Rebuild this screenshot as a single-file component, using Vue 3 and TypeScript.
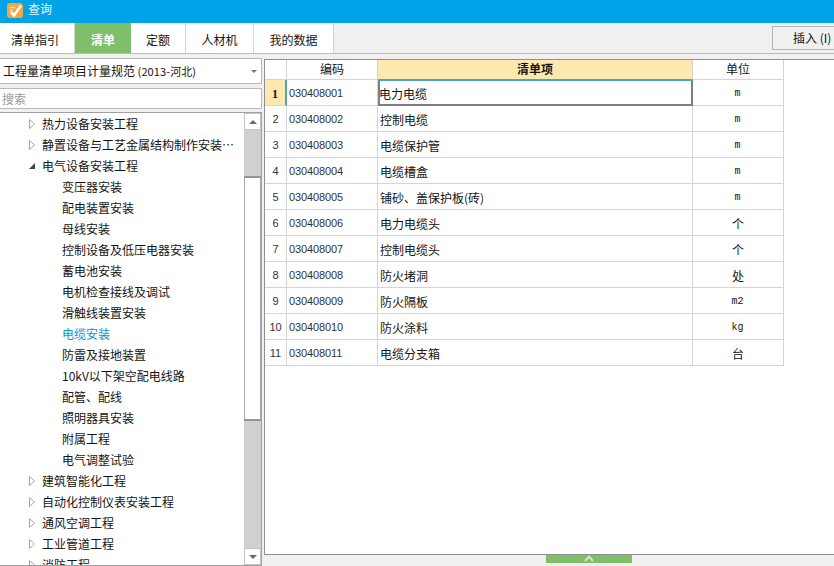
<script setup lang="ts">
const tabs = [
  { label: '清单指引', width: 75, first: true },
  { label: '清单', width: 56, active: true },
  { label: '定额', width: 55 },
  { label: '人材机', width: 68 },
  { label: '我的数据', width: 80 },
]
interface TreeItem { label: string; level: 0 | 1; state?: 'closed' | 'open'; current?: boolean }
const tree: TreeItem[] = [
  { label: '热力设备安装工程', level: 0, state: 'closed' },
  { label: '静置设备与工艺金属结构制作安装…', level: 0, state: 'closed' },
  { label: '电气设备安装工程', level: 0, state: 'open' },
  { label: '变压器安装', level: 1 },
  { label: '配电装置安装', level: 1 },
  { label: '母线安装', level: 1 },
  { label: '控制设备及低压电器安装', level: 1 },
  { label: '蓄电池安装', level: 1 },
  { label: '电机检查接线及调试', level: 1 },
  { label: '滑触线装置安装', level: 1 },
  { label: '电缆安装', level: 1, current: true },
  { label: '防雷及接地装置', level: 1 },
  { label: '10kV以下架空配电线路', level: 1 },
  { label: '配管、配线', level: 1 },
  { label: '照明器具安装', level: 1 },
  { label: '附属工程', level: 1 },
  { label: '电气调整试验', level: 1 },
  { label: '建筑智能化工程', level: 0, state: 'closed' },
  { label: '自动化控制仪表安装工程', level: 0, state: 'closed' },
  { label: '通风空调工程', level: 0, state: 'closed' },
  { label: '工业管道工程', level: 0, state: 'closed' },
  { label: '消防工程', level: 0, state: 'closed' },
]
const rows = [
  ['030408001', '电力电缆', 'm'],
  ['030408002', '控制电缆', 'm'],
  ['030408003', '电缆保护管', 'm'],
  ['030408004', '电缆槽盒', 'm'],
  ['030408005', '铺砂、盖保护板(砖)', 'm'],
  ['030408006', '电力电缆头', '个'],
  ['030408007', '控制电缆头', '个'],
  ['030408008', '防火堵洞', '处'],
  ['030408009', '防火隔板', 'm2'],
  ['030408010', '防火涂料', 'kg'],
  ['030408011', '电缆分支箱', '台'],
]
</script>

<template>
  <div class="app">
    <header class="titlebar">
      <svg class="logo" width="16" height="16" viewBox="0 0 16 16">
        <rect x="0" y="0" width="16" height="15" rx="3" fill="#f3a63c" />
        <path d="M2.5 4.5 H8.5 M2.5 7.5 H6" fill="none" stroke="#fbdca6" stroke-width="1.6" />
        <path d="M4 9 L7 12.5 L14 2.5" fill="none" stroke="#fff" stroke-width="2.6" />
      </svg>
      <span>查询</span>
    </header>
    <nav class="tabbar">
      <div
        v-for="tab in tabs"
        :key="tab.label"
        class="tab"
        :class="{ active: tab.active, first: tab.first }"
        :style="{ width: tab.width + 'px' }"
      >{{ tab.label }}</div>
      <button class="insert">插入 (I)</button>
    </nav>
    <main class="body">
      <aside class="left">
        <div class="select">
          <span>工程量清单项目计量规范<small> (2013-河北)</small></span>
          <i class="caret"></i>
        </div>
        <div class="search">搜索</div>
        <div class="treebox">
          <ul class="tree">
            <li
              v-for="item in tree"
              :key="item.label"
              class="node"
              :class="['lv' + item.level, { current: item.current }]"
            >
              <svg v-if="item.state === 'closed'" class="arrow" width="6" height="10" viewBox="0 0 6 10">
                <path d="M.5 .5 L5.5 5 L.5 9.5 Z" fill="#fff" stroke="#a6a6a6" />
              </svg>
              <svg v-else-if="item.state === 'open'" class="arrow" width="6" height="10" viewBox="0 0 6 10">
                <path d="M6 2 V8 H0 Z" fill="#444" />
              </svg>
              <span>{{ item.label }}</span>
            </li>
          </ul>
          <div class="scroll">
            <div class="sbtn"><i class="up"></i></div>
            <div class="track-top"></div>
            <div class="thumb"></div>
            <div class="track-bottom"></div>
            <div class="sbtn"><i class="down"></i></div>
          </div>
        </div>
      </aside>
      <section class="right">
        <div class="gridbox">
          <div class="grid">
            <div class="cell head idx"></div>
            <div class="cell head">编码</div>
            <div class="cell head hl">清单项</div>
            <div class="cell head">单位</div>
            <template v-for="(row, i) in rows" :key="row[0]">
              <div class="cell idx" :class="{ selidx: i === 0 }">{{ i + 1 }}</div>
              <div class="cell code">{{ row[0] }}</div>
              <div class="cell name" :class="{ selname: i === 0 }">{{ row[1] }}</div>
              <div class="cell unit" :class="{ latin: /^[a-z]/.test(row[2]) }">{{ row[2] }}</div>
            </template>
          </div>
        </div>
        <div class="footer">
          <div class="handle">
            <svg width="12" height="8" viewBox="0 0 12 8"><path d="M2 6 L6 1.5 L10 6" fill="none" stroke="#cfe8c8" stroke-width="2" /></svg>
          </div>
        </div>
      </section>
    </main>
  </div>
</template>

<style>
html, body { margin: 0; height: 100%; overflow: hidden; background: #f0f0f0; }
</style>

<style scoped>
.app {
  width: 834px;
  height: 566px;
  display: flex;
  flex-direction: column;
  overflow: hidden;
  font: 12px/1 "Noto Sans CJK SC", "Liberation Sans", sans-serif;
  color: #141414;
}
.titlebar {
  height: 23px;
  flex: none;
  background: #00a2e8;
  color: #e6f6fd;
  display: flex;
  align-items: center;
  gap: 5px;
  padding: 0 0 6px 7px;
  box-sizing: border-box;
  font-size: 12px;
}
.logo { flex: none; margin-top: 5px; }
.tabbar {
  height: 31px;
  flex: none;
  box-sizing: border-box;
  background: #f0f0f0;
  border-bottom: 1px solid #a5cf98;
  display: flex;
}
.tab {
  background: #fff;
  border-right: 1px solid #cfdccb;
  box-sizing: border-box;
  display: flex;
  align-items: center;
  justify-content: center;
  padding-top: 3px;
}
.tab.first { padding-right: 4px; }
.tab.active {
  background: #7fbf69;
  color: #fff;
  font-weight: 700;
  border-right: none;
}
.insert {
  margin: 3px 0 0 auto;
  width: 62px;
  height: 24px;
  box-sizing: border-box;
  border: 1px solid #b4b4b4;
  border-right: none;
  background: #f0f0f0;
  font: inherit;
  color: #141414;
  padding: 0 0 0 20px;
  text-align: left;
  white-space: nowrap;
  overflow: hidden;
}
.body {
  flex: 1;
  min-height: 0;
  display: flex;
  background: #f0f0f0;
}
.left {
  width: 262px;
  flex: none;
  padding-top: 4px;
  display: flex;
  flex-direction: column;
  box-sizing: border-box;
}
.select {
  height: 26px;
  flex: none;
  box-sizing: border-box;
  background: #fff;
  border: 1px solid #b9b9b9;
  border-left: none;
  display: flex;
  align-items: center;
  justify-content: space-between;
  padding: 0 4px 0 3px;
}
.select small { font-size: 11px; letter-spacing: 0.1px; }
.caret {
  width: 0;
  height: 0;
  border-left: 3px solid transparent;
  border-right: 3px solid transparent;
  border-top: 3px solid #777;
}
.search {
  height: 21px;
  flex: none;
  margin-top: 4px;
  box-sizing: border-box;
  background: #fff;
  border: 1px solid #b9b9b9;
  border-left: none;
  display: flex;
  align-items: center;
  padding-left: 2px;
  color: #9a9a9a;
}
.treebox {
  flex: 1;
  min-height: 0;
  margin-top: 3px;
  background: #fff;
  border-top: 1px solid #a0a0a0;
  border-bottom: 1px solid #a0a0a0;
  border-right: 1px solid #a0a0a0;
  display: flex;
  overflow: hidden;
}
.tree {
  flex: 1;
  margin: 0;
  padding: 0;
  list-style: none;
  overflow: hidden;
}
.node {
  height: 21px;
  display: flex;
  align-items: center;
  white-space: nowrap;
}
.node.lv0 { padding-left: 29px; gap: 7px; }
.node.lv1 { padding-left: 62px; }
.node.current { color: #0a96d0; }
.arrow { flex: none; }
.scroll {
  width: 17px;
  flex: none;
  display: flex;
  flex-direction: column;
  background: #d0d0d0;
  box-sizing: border-box;
}
.sbtn {
  height: 17px;
  flex: none;
  box-sizing: border-box;
  border: 1px solid #c4c4c4;
  background: #fff;
  display: flex;
  align-items: center;
  justify-content: center;
}
.up, .down {
  width: 0;
  height: 0;
  border-left: 4px solid transparent;
  border-right: 4px solid transparent;
}
.up { border-bottom: 4px solid #6d6d6d; }
.down { border-top: 4px solid #6d6d6d; }
.track-top { height: 46px; flex: none; }
.thumb {
  flex: none;
  height: 245px;
  box-sizing: border-box;
  background: #fff;
  border: 1px solid #a8a8a8;
  border-top: 2px solid #959595;
  border-bottom: 2px solid #959595;
}
.track-bottom { flex: 1; }
.right {
  flex: 1;
  min-width: 0;
  padding: 5px 0 0 2px;
  display: flex;
  flex-direction: column;
}
.gridbox {
  flex: 1;
  min-height: 0;
  background: #fff;
  border-top: 1px solid #8e8e8e;
  border-bottom: 1px solid #8e8e8e;
  border-left: 1px solid #8e8e8e;
  overflow: hidden;
}
.grid {
  display: grid;
  grid-template-columns: 22px 91px 315px 91px;
  grid-template-rows: 20px repeat(11, 26px);
  width: 519px;
}
.cell {
  box-sizing: border-box;
  border-right: 1px solid #d4d4d4;
  border-bottom: 1px solid #d4d4d4;
  display: flex;
  align-items: center;
  white-space: nowrap;
  background: #fff;
  padding-top: 2px;
}
.cell.head { justify-content: center; font-size: 12px; padding-top: 0; padding-bottom: 1px; }
.head.hl { background: #fde8ad; font-weight: 700; border-bottom-color: #4ca3c4; }
.idx { justify-content: center; font: 11px/1 "Liberation Sans", sans-serif; color: #333; }
.selidx {
  background: #fde8ad;
  font: 700 12px/1 "Liberation Serif", serif;
  color: #141414;
  border-right: 2px solid #4ca3c4;
}
.code { padding-left: 2px; font: 11px/1 "Liberation Sans", sans-serif; letter-spacing: -0.12px; color: #333; }
.name { padding-left: 2px; font-size: 12px; }
.selname {
  border: 2px solid #7f7f7f;
  border-top: 1px solid #4ca3c4;
  padding-left: 0;
  text-indent: -1px;
}
.unit { justify-content: center; }
.unit.latin { font: 10px/1 "Liberation Mono", monospace; padding-right: 1px; }
.footer {
  height: 11px;
  flex: none;
  display: flex;
  padding-left: 282px;
}
.handle {
  width: 86px;
  height: 8px;
  background: #7fbf69;
  display: flex;
  justify-content: center;
  overflow: hidden;
}
</style>
